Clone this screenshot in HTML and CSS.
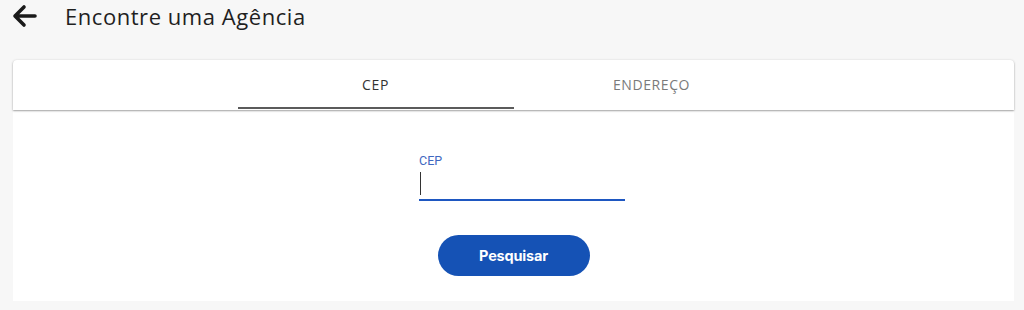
FILE: index.html
```html
<!DOCTYPE html>
<html lang="pt-BR">
<head>
<meta charset="utf-8">
<title>Encontre uma Agência</title>
<link rel="stylesheet" href="styles.css">
</head>
<body>
<header class="topbar">
  <span class="back" aria-label="Voltar">
    <svg width="26" height="24" viewBox="0 0 26 24">
      <path d="M23 12H3.5M12 3L3 12l9 9" fill="none" stroke="#1a1a1a" stroke-width="3.6" stroke-linecap="round" stroke-linejoin="round"/>
    </svg>
  </span>
  <h1 class="title">Encontre uma Agência</h1>
</header>
<main class="wrap">
  <nav class="tabs">
    <div class="tab active">CEP</div>
    <div class="tab">ENDEREÇO</div>
  </nav>
  <section class="panel">
    <div class="field">
      <label class="label">CEP</label>
      <div class="input"><span class="caret"></span></div>
    </div>
    <button class="btn">Pesquisar</button>
  </section>
</main>
</body>
</html>
```
FILE: styles.css
```css
html, body {
  margin: 0;
  padding: 0;
  background: #f7f7f7;
}
body {
  font-family: "Open Sans", "Liberation Sans", sans-serif;
  color: #222;
  width: 1024px;
  height: 310px;
  overflow: hidden;
}
.topbar {
  display: flex;
  align-items: center;
  height: 32px;
  padding-left: 12px;
}
.back {
  display: flex;
  width: 26px;
  height: 24px;
  margin-right: 27px;
}
.title {
  margin: 0;
  font-family: "Open Sans", sans-serif;
  font-weight: 500;
  font-size: 22px;
  line-height: 30px;
  color: #1f1f1f;
  letter-spacing: 0.55px;
}
.wrap {
  margin: 28px 10px 0 13px;
}
.tabs {
  display: flex;
  justify-content: center;
  height: 50px;
  background: #fff;
  border-radius: 4px 4px 0 0;
  box-shadow: 0 1px 2px rgba(0,0,0,0.35), 0 0 3px rgba(0,0,0,0.08);
  position: relative;
  z-index: 1;
}
.tab {
  width: 276px;
  display: flex;
  align-items: center;
  justify-content: center;
  font-family: "Open Sans", sans-serif;
  font-size: 14px;
  color: #7a7a7a;
  letter-spacing: 0.6px;
  box-sizing: border-box;
  padding-top: 2px;
  border-bottom: 2px solid transparent;
  margin-bottom: 1px;
}
.tab.active {
  color: #333;
  border-bottom-color: #5b5b5b;
}
.panel {
  background: #fff;
  height: 191px;
  box-sizing: border-box;
  padding-top: 44px;
  display: flex;
  flex-direction: column;
  align-items: center;
}
.field {
  width: 206px;
  margin-left: 17px;
}
.label {
  display: block;
  font-family: "Roboto", sans-serif;
  font-size: 12.5px;
  line-height: 14px;
  color: #3e68c0;
}
.input {
  padding-top: 4px;
  box-sizing: border-box;
  height: 33px;
  border-bottom: 2px solid #1e57c1;
}
.caret {
  display: block;
  width: 1px;
  height: 23px;
  background: #333;
  margin-left: 1px;
}
.btn {
  margin-top: 34px;
  width: 152px;
  height: 41px;
  border: none;
  border-radius: 21px;
  background: #1552b5;
  color: #fff;
  font-family: "Inter", "Roboto", sans-serif;
  font-weight: 700;
  font-size: 14.5px;
  letter-spacing: -0.2px;
  padding: 0;
}
```
